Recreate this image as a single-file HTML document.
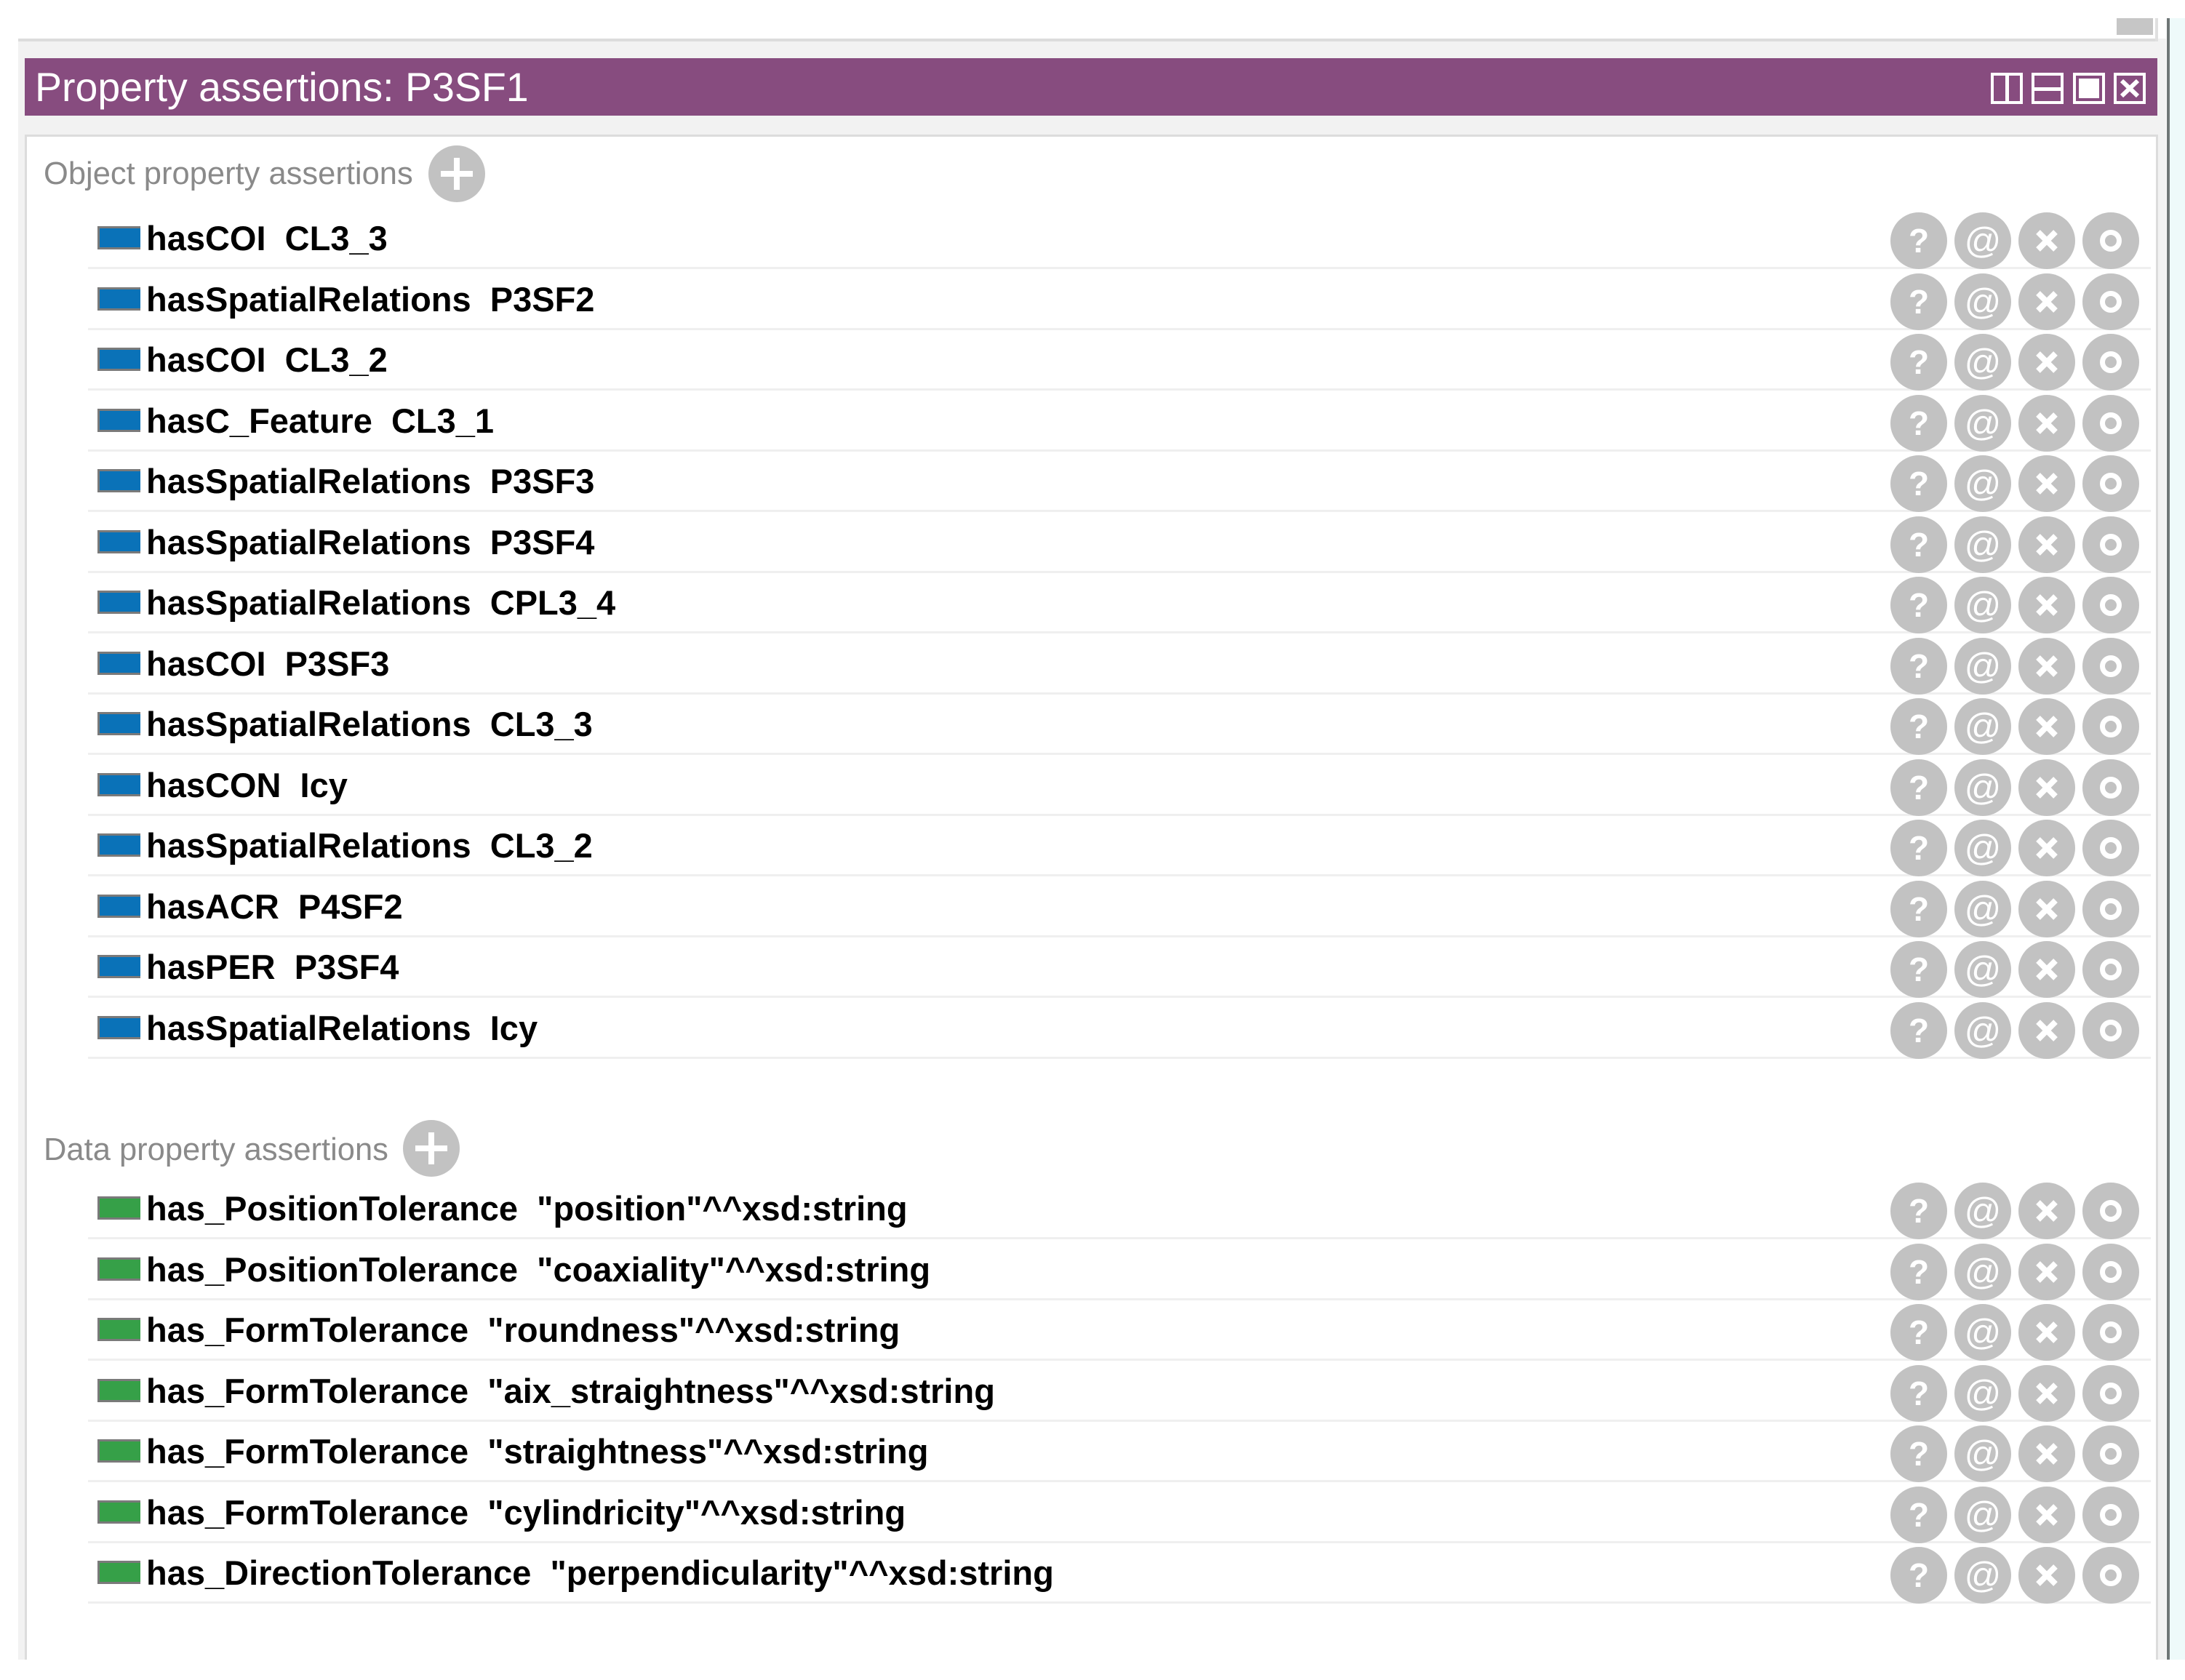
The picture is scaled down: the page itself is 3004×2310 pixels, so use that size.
<!DOCTYPE html>
<html><head><meta charset="utf-8"><style>
*{margin:0;padding:0;box-sizing:border-box}
body{width:3004px;height:2310px;background:#fff;position:relative;overflow:hidden;font-family:"Liberation Sans",Arial,sans-serif}
.abs{position:absolute}
.sw{position:absolute;left:134px;width:59px;height:32px;border:3px solid #7a7a7a;border-right:none}
.tx{position:absolute;left:201px;font-weight:bold;font-size:47px;color:#000;white-space:pre;line-height:56px}
.sep{position:absolute;left:121px;width:2836px;height:3px;background:#efefef}
.btn{position:absolute;width:78px;height:78px;border-radius:50%;background:#c2c2c2;color:#fff;font-weight:bold;text-align:center;line-height:78px;font-size:46px}
.ring{position:absolute;left:24px;top:24px;width:30px;height:30px;border:7px solid #fff;border-radius:50%}
.hdr{position:absolute;left:60px;font-size:43.5px;color:#8a8a8a;line-height:50px}
.plus{position:absolute;width:78px;height:78px;border-radius:50%;background:#c2c2c2}
.plus:before{content:"";position:absolute;left:35px;top:17px;width:8px;height:44px;background:#fff}
.plus:after{content:"";position:absolute;left:17px;top:35px;width:44px;height:8px;background:#fff}
.ti{position:absolute;top:100px;width:44px;height:43px;border:4px solid #fff}
</style></head><body>
<div class="abs" style="left:25px;top:53px;width:2953px;height:2229px;background:#f2f2f2"></div>
<div class="abs" style="left:25px;top:53px;width:2940px;height:4px;background:#dcdcdc"></div>
<div class="abs" style="left:2910px;top:25px;width:50px;height:23px;background:#c6c6c6"></div>
<div class="abs" style="left:2963px;top:25px;width:4px;height:32px;background:#e0e0e0"></div>
<div class="abs" style="left:2979px;top:25px;width:4px;height:2257px;background:#6f7676"></div>
<div class="abs" style="left:2983px;top:25px;width:21px;height:2257px;background:#eefafa"></div>
<div class="abs" style="left:34px;top:80px;width:2932px;height:79px;background:#874c7f"></div>
<div class="abs" style="left:48px;top:88px;font-size:55.5px;color:#fff;line-height:64px;white-space:pre">Property assertions: P3SF1</div>
<div class="ti" style="left:2737px"><div class="abs" style="left:16px;top:0;width:5px;height:35px;background:#fff"></div></div>
<div class="ti" style="left:2793px"><div class="abs" style="left:0;top:16px;width:36px;height:5px;background:#fff"></div></div>
<div class="ti" style="left:2850px"><div class="abs" style="left:4px;top:4px;width:28px;height:27px;background:#fff"></div></div>
<div class="ti" style="left:2906px"><svg class="abs" style="left:2px;top:2px" width="32" height="31"><path d="M5 5L27 26M27 5L5 26" stroke="#fff" stroke-width="6"/></svg></div>
<div class="abs" style="left:34px;top:185px;width:2933px;height:2097px;background:#fff;border:3px solid #dcdcdc;border-bottom:none"></div>
<div class="hdr" style="top:214px">Object property assertions</div>
<div class="plus" style="left:589px;top:200px"></div>
<div class="hdr" style="top:1556px">Data property assertions</div>
<div class="plus" style="left:554px;top:1540px"></div>
<div id="rows"></div>
<script>
var obj=["hasCOI  CL3_3","hasSpatialRelations  P3SF2","hasCOI  CL3_2","hasC_Feature  CL3_1","hasSpatialRelations  P3SF3","hasSpatialRelations  P3SF4","hasSpatialRelations  CPL3_4","hasCOI  P3SF3","hasSpatialRelations  CL3_3","hasCON  Icy","hasSpatialRelations  CL3_2","hasACR  P4SF2","hasPER  P3SF4","hasSpatialRelations  Icy"];
var dat=['has_PositionTolerance  "position"^^xsd:string','has_PositionTolerance  "coaxiality"^^xsd:string','has_FormTolerance  "roundness"^^xsd:string','has_FormTolerance  "aix_straightness"^^xsd:string','has_FormTolerance  "straightness"^^xsd:string','has_FormTolerance  "cylindricity"^^xsd:string','has_DirectionTolerance  "perpendicularity"^^xsd:string'];
var h="";
function add(list,firstCenter,color){
 for(var i=0;i<list.length;i++){
  var c=firstCenter+i*83.5;
  h+='<div class="sw" style="top:'+(c-18)+'px;background:'+color+'"></div>';
  h+='<div class="tx" style="top:'+(c-29)+'px">'+list[i].replace(/</g,"&lt;")+'</div>';
  h+='<div class="sep" style="top:'+(c+38)+'px"></div>';
  var xs=[2638,2726,2814,2902];
  h+='<div class="btn" style="left:'+(xs[0]-39)+'px;top:'+(c-37)+'px">?</div>';
  h+='<div class="btn" style="left:'+(xs[1]-39)+'px;top:'+(c-37)+'px;font-weight:normal;font-size:50px">@</div>';
  h+='<div class="btn" style="left:'+(xs[2]-39)+'px;top:'+(c-37)+'px"><svg class="abs" style="left:22px;top:22px" width="34" height="34"><path d="M5 5L29 29M29 5L5 29" stroke="#fff" stroke-width="8"/></svg></div>';
  h+='<div class="btn" style="left:'+(xs[3]-39)+'px;top:'+(c-37)+'px"><div class="ring"></div></div>';
 }
}
add(obj,329,"#0a72b8");
add(dat,1663,"#36a048");
document.getElementById("rows").innerHTML=h;
</script>
</body></html>
